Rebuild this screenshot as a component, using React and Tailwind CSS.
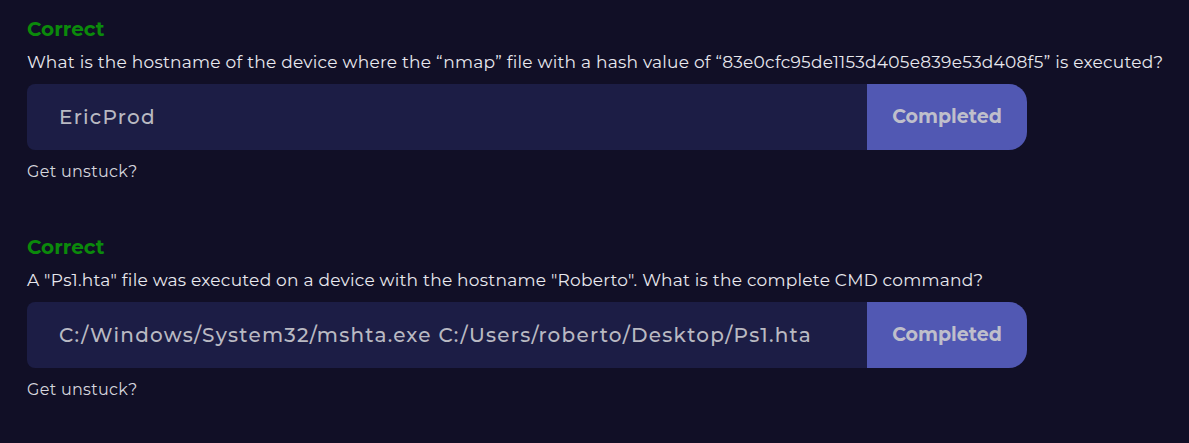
import React from "react";

const font = { fontFamily: "Montserrat, Inter, 'Noto Sans', sans-serif" };

function Block({ question, answer }) {
  return (
    <div className="flex flex-col">
      <div className="text-[20px] leading-[24px] font-bold text-[#0b8a0b]">Correct</div>
      <div className="mt-[9px] whitespace-nowrap text-[17px] leading-[24px] text-[#e8e8ee] tracking-[0.24px]">{question}</div>
      <div className="mt-[10px] flex h-[66px] w-[1000px]">
        <div className="flex flex-1 items-center rounded-l-[8px] bg-[#1c1d45] pl-[32px] text-[20px] font-medium text-[#b9b9c2] tracking-[1.25px]">
          {answer}
        </div>
        <div className="flex w-[160px] items-center justify-center rounded-r-[18px] bg-[#5158b3] text-[19px] font-bold text-[#bfbfcb]">
          Completed
        </div>
      </div>
      <div className="mt-[12px] text-[16px] leading-[20px] text-[#d6d6de] tracking-[0.3px]">Get unstuck?</div>
    </div>
  );
}

export default function App() {
  return (
    <div className="min-h-[443px] w-full overflow-hidden bg-[#110f26] px-[27px] pt-[17px]" style={font}>
      <div className="flex flex-col gap-[53px]">
        <Block
          question={"What is the hostname of the device where the \u201cnmap\u201d file with a hash value of \u201c83e0cfc95de1153d405e839e53d408f5\u201d is executed?"}
          answer="EricProd"
        />
        <Block
          question={'A "Ps1.hta" file was executed on a device with the hostname "Roberto". What is the complete CMD command?'}
          answer="C:/Windows/System32/mshta.exe C:/Users/roberto/Desktop/Ps1.hta"
        />
      </div>
    </div>
  );
}
